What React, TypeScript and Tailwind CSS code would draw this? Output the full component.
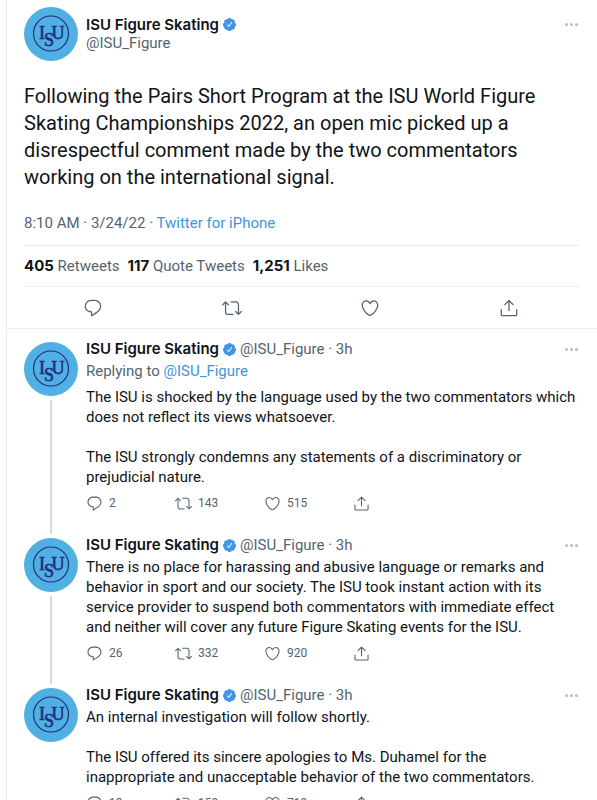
import React from 'react';

const ICONS = {
  reply: 'M14.046 2.242l-4.148-.01h-.002c-4.374 0-7.8 3.427-7.8 7.802 0 4.098 3.186 7.206 7.465 7.37v3.828c0 .108.044.286.12.403.142.225.384.347.632.347.138 0 .277-.038.402-.118.264-.168 6.473-4.14 8.088-5.506 1.902-1.61 3.04-3.97 3.043-6.312v-.017c-.006-4.367-3.43-7.787-7.8-7.788zm3.787 12.972c-1.134.96-4.862 3.405-6.772 4.643V16.67c0-.414-.335-.75-.75-.75h-.396c-3.66 0-6.318-2.476-6.318-5.886 0-3.534 2.768-6.302 6.3-6.302l4.147.01h.002c3.532 0 6.3 2.766 6.302 6.296-.003 1.91-.942 3.844-2.514 5.176z',
  retweet: 'M23.77 15.67c-.292-.293-.767-.293-1.06 0l-2.22 2.22V7.65c0-2.068-1.683-3.75-3.75-3.75h-5.85c-.414 0-.75.336-.75.75s.336.75.75.75h5.85c1.24 0 2.25 1.01 2.25 2.25v10.24l-2.22-2.22c-.293-.293-.768-.293-1.06 0s-.294.768 0 1.06l3.5 3.5c.145.147.337.22.53.22s.383-.072.53-.22l3.5-3.5c.294-.292.294-.767 0-1.06zm-10.66 3.28H7.26c-1.24 0-2.25-1.01-2.25-2.25V6.46l2.22 2.22c.148.147.34.22.532.22s.384-.073.53-.22c.293-.293.293-.768 0-1.06l-3.5-3.5c-.293-.294-.768-.294-1.06 0l-3.5 3.5c-.294.292-.294.767 0 1.06s.767.293 1.06 0l2.22-2.22V16.7c0 2.068 1.683 3.75 3.75 3.75h5.85c.414 0 .75-.336.75-.75s-.337-.75-.75-.75z',
  like: 'M12 21.638h-.014C9.403 21.59 1.95 14.856 1.95 8.478c0-3.064 2.525-5.754 5.403-5.754 2.29 0 3.83 1.58 4.646 2.73.814-1.148 2.354-2.73 4.645-2.73 2.88 0 5.404 2.69 5.404 5.755 0 6.376-7.454 13.11-10.037 13.157H12zM7.354 4.225c-2.08 0-3.903 1.988-3.903 4.255 0 5.74 7.034 11.596 8.55 11.658 1.518-.062 8.55-5.917 8.55-11.658 0-2.267-1.823-4.255-3.903-4.255-2.528 0-3.94 2.936-3.952 2.965-.23.562-1.156.562-1.387 0-.014-.03-1.425-2.965-3.954-2.965z',
  share: 'M17.53 7.47l-5-5c-.293-.293-.768-.293-1.06 0l-5 5c-.294.293-.294.768 0 1.06s.767.294 1.06 0l3.72-3.72V15c0 .414.336.75.75.75s.75-.336.75-.75V4.81l3.72 3.72c.146.147.338.22.53.22s.384-.072.53-.22c.293-.293.293-.767 0-1.06zM19.708 21.944H4.292C3.028 21.944 2 20.916 2 19.652V14c0-.414.336-.75.75-.75s.75.336.75.75v5.652c0 .437.355.792.792.792h15.416c.437 0 .792-.355.792-.792V14c0-.414.336-.75.75-.75s.75.336.75.75v5.652c0 1.264-1.028 2.292-2.292 2.292z',
  verified: 'M22.5 12.5c0-1.58-.875-2.95-2.148-3.6.154-.435.238-.905.238-1.4 0-2.21-1.71-3.998-3.818-3.998-.47 0-.92.084-1.336.25C14.818 2.415 13.51 1.5 12 1.5s-2.816.917-3.437 2.25c-.415-.165-.866-.25-1.336-.25-2.11 0-3.818 1.79-3.818 4 0 .494.083.964.237 1.4-1.272.65-2.147 2.018-2.147 3.6 0 1.495.782 2.798 1.942 3.486-.02.17-.032.34-.032.514 0 2.21 1.708 4 3.818 4 .47 0 .92-.086 1.335-.25.62 1.334 1.926 2.25 3.437 2.25 1.512 0 2.818-.916 3.437-2.25.415.163.865.248 1.336.248 2.11 0 3.818-1.79 3.818-4 0-.174-.012-.344-.033-.513 1.158-.687 1.943-1.99 1.943-3.484zm-6.616-3.334l-4.334 6.5c-.145.217-.382.334-.625.334-.143 0-.288-.04-.416-.126l-.115-.094-2.415-2.415c-.293-.293-.293-.768 0-1.06s.768-.294 1.06 0l1.77 1.767 3.825-5.74c.23-.345.696-.436 1.04-.207.346.23.44.696.21 1.04z',
};

type IconName = keyof typeof ICONS;

const ACTIONS: { icon: IconName; label: string }[] = [
  { icon: 'reply', label: 'Reply' },
  { icon: 'retweet', label: 'Retweet' },
  { icon: 'like', label: 'Like' },
  { icon: 'share', label: 'Share' },
];

const STATS = [
  { num: '405', label: 'Retweets' },
  { num: '117', label: 'Quote Tweets' },
  { num: '1,251', label: 'Likes' },
];

interface Reply {
  replyingTo?: string;
  paragraphs: string[];
  counts: string[];
}

const REPLIES: Reply[] = [
  {
    replyingTo: '@ISU_Figure',
    paragraphs: [
      'The ISU is shocked by the language used by the two commentators which does not reflect its views whatsoever.',
      'The ISU strongly condemns any statements of a discriminatory or prejudicial nature.',
    ],
    counts: ['2', '143', '515'],
  },
  {
    paragraphs: [
      'There is no place for harassing and abusive language or remarks and behavior in sport and our society. The ISU took instant action with its service provider to suspend both commentators with immediate effect and neither will cover any future Figure Skating events for the ISU.',
    ],
    counts: ['26', '332', '920'],
  },
  {
    paragraphs: [
      'An internal investigation will follow shortly.',
      'The ISU offered its sincere apologies to Ms. Duhamel for the inappropriate and unacceptable behavior of the two commentators.',
    ],
    counts: ['13', '159', '719'],
  },
];

const Icon: React.FC<{ name: IconName; className: string }> = ({ name, className }) => (
  <svg viewBox="0 0 24 24" fill="currentColor" aria-hidden="true" className={className}>
    <path d={ICONS[name]} />
  </svg>
);

// round club badge, the S hangs below the I and the U
const Avatar: React.FC = () => (
  <svg viewBox="0 0 54 54" aria-hidden="true" className="size-[54px] shrink-0">
    <circle cx="27" cy="27" r="27" fill="#50b0e3" />
    <circle cx="27" cy="26.5" r="17.5" fill="none" stroke="#252b80" strokeWidth="1.2" />
    <text x="15" y="31.5" fontSize="18" fill="#252b80" stroke="#252b80" strokeWidth="0.6" fontFamily="Liberation Serif, serif">
      I<tspan dx="-1" dy="7.5">S</tspan>
      <tspan dx="-2.5" dy="-7.5">U</tspan>
    </text>
  </svg>
);

const Name: React.FC = () => (
  <span className="flex items-center gap-[3px] font-['Inter',sans-serif] font-semibold text-[#0f1419]">
    ISU Figure Skating
    <Icon name="verified" className="size-[15px] text-[#4294e8]" />
  </span>
);

const MoreButton: React.FC = () => (
  <button aria-label="More" className="ml-auto flex h-5 shrink-0 items-center gap-[2px] pr-[2px]">
    {[0, 1, 2].map((i) => (
      <span key={i} className="size-[3px] rounded-full bg-[#b3bdc6]"></span>
    ))}
  </button>
);

const Thread: React.FC<{ reply: Reply; last: boolean }> = ({ reply, last }) => (
  <article className="flex gap-2">
    <div className="flex flex-col items-center gap-1 pt-[3px]">
      <Avatar />
      {!last && <div className="mb-px w-[2px] grow bg-[#cfd9de]"></div>}
    </div>
    <div className="min-w-0 grow pb-[22px]">
      <div className="flex h-5 items-center gap-[3px] text-[#536471]">
        <Name />
        <span>@ISU_Figure · 3h</span>
        <MoreButton />
      </div>
      {reply.replyingTo && (
        <p className="mt-[2px] mb-[6px] text-[#536471]">
          Replying to <a href="#" className="text-[#4294e0]">{reply.replyingTo}</a>
        </p>
      )}
      <div className="mt-[2px] space-y-5 pr-[3px]">
        {reply.paragraphs.map((text) => (
          <p key={text}>{text}</p>
        ))}
      </div>
      <div className="mt-[6px] grid max-w-[356px] grid-cols-4 text-[#536471]">
        {ACTIONS.map(({ icon, label }, i) => (
          <button key={icon} aria-label={label} className="flex h-5 items-center gap-[6px] text-xs">
            <Icon name={icon} className="size-[17px]" />
            {reply.counts[i]}
          </button>
        ))}
      </div>
    </div>
  </article>
);

export default function App() {
  return (
    <main className="ml-[6px] h-screen overflow-hidden border-l border-[#e6ecf0] bg-white font-['Roboto',sans-serif] text-[15px] leading-5 text-[#0f1419]">
      <article className="px-[17px] pt-[7px]">
        <header className="flex gap-2">
          <Avatar />
          <div className="pt-2 leading-[19px]">
            <Name />
            <p className="text-[#536471]">@ISU_Figure</p>
          </div>
          <div className="ml-auto pt-[7px]">
            <MoreButton />
          </div>
        </header>

        <p className="mt-[22px] text-xl leading-[27px]">
          Following the Pairs Short Program at the ISU World Figure Skating Championships 2022, an open mic picked up a disrespectful comment made by the two commentators working on the international signal.
        </p>

        <p className="mt-[22px] pb-3 text-[#536471]">
          8:10 AM · 3/24/22 · <a href="#" className="text-[#4294e0]">Twitter for iPhone</a>
        </p>

        <div className="flex h-[42px] items-center gap-2 border-y border-[#ebeef0] text-[#536471]">
          {STATS.map((stat) => (
            <span key={stat.label}>
              <strong className="font-['Inter',sans-serif] font-bold text-[#0f1419]">{stat.num}</strong> {stat.label}
            </span>
          ))}
        </div>

        <div className="mr-[2px] grid h-[41px] grid-cols-4 text-[#536471]">
          {ACTIONS.map(({ icon, label }) => (
            <button key={icon} aria-label={label} className="flex items-center justify-center">
              <Icon name={icon} className="size-5" />
            </button>
          ))}
        </div>
      </article>

      <section className="border-t border-[#e6ecf0] px-[17px] pt-[10px]">
        {REPLIES.map((reply, i) => (
          <Thread key={reply.paragraphs[0]} reply={reply} last={i === REPLIES.length - 1} />
        ))}
      </section>
    </main>
  );
}
